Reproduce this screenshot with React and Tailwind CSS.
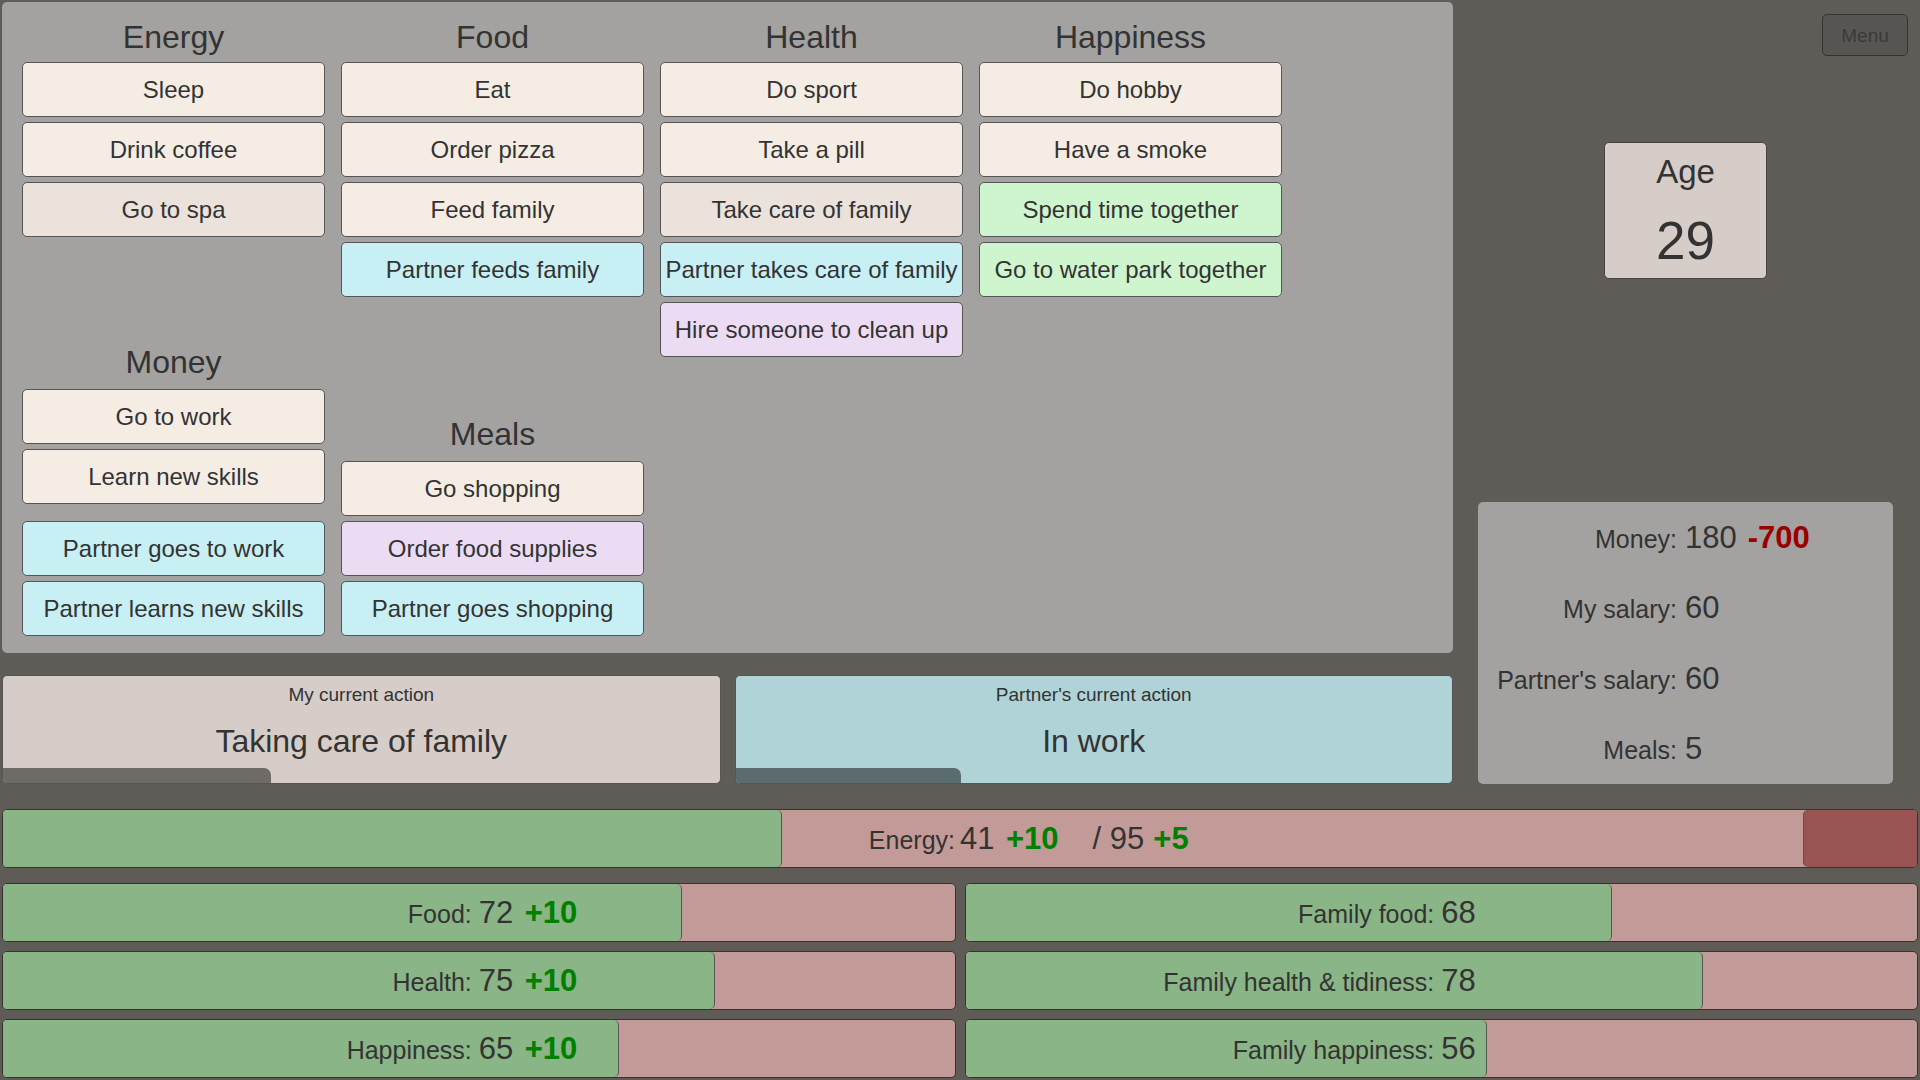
import React from 'react'

const font = "font-['Liberation_Sans',Arial,sans-serif]"

const tones = {
  base: 'bg-[#f5ede4]',
  busy: 'bg-[#ebe3db]',
  partner: 'bg-[#c8f0f4]',
  paid: 'bg-[#ebdcf3]',
  together: 'bg-[#cff5cf]',
}

const topGroups = [
  {
    title: 'Energy',
    actions: [['Sleep'], ['Drink coffee'], ['Go to spa', 'busy']],
    lower: {
      title: 'Money',
      actions: [['Go to work'], ['Learn new skills']],
      partner: [['Partner goes to work', 'partner'], ['Partner learns new skills', 'partner']],
    },
  },
  {
    title: 'Food',
    actions: [['Eat'], ['Order pizza'], ['Feed family'], ['Partner feeds family', 'partner']],
    lower: {
      title: 'Meals',
      actions: [['Go shopping'], ['Order food supplies', 'paid'], ['Partner goes shopping', 'partner']],
    },
  },
  {
    title: 'Health',
    actions: [
      ['Do sport'],
      ['Take a pill'],
      ['Take care of family', 'busy'],
      ['Partner takes care of family', 'partner'],
      ['Hire someone to clean up', 'paid'],
    ],
  },
  {
    title: 'Happiness',
    actions: [
      ['Do hobby'],
      ['Have a smoke'],
      ['Spend time together', 'together'],
      ['Go to water park together', 'together'],
    ],
  },
]

const myBars = [
  { label: 'Food', value: 72, delta: '+10', fill: 71.4 },
  { label: 'Health', value: 75, delta: '+10', fill: 74.8 },
  { label: 'Happiness', value: 65, delta: '+10', fill: 64.7 },
]

const familyBars = [
  { label: 'Family food', value: 68, fill: 67.9 },
  { label: 'Family health & tidiness', value: 78, fill: 77.5 },
  { label: 'Family happiness', value: 56, fill: 54.8 },
]

function ActionButton({ label, kind = 'base' }) {
  return (
    <button
      className={`h-[55px] w-full rounded-[5px] border border-[#555] text-[24px] leading-none text-[#333] ${tones[kind]}`}
    >
      {label}
    </button>
  )
}

function ButtonList({ items }) {
  return (
    <div className="flex flex-col gap-[5px]">
      {items.map(([label, kind]) => (
        <ActionButton key={label} label={label} kind={kind} />
      ))}
    </div>
  )
}

function Column({ group }) {
  return (
    <div className="flex w-[303px] flex-col">
      <div className="flex h-[60px] items-center justify-center pt-[10px] text-[32px] leading-none text-[#333]">
        {group.title}
      </div>
      <ButtonList items={group.actions} />
      {group.lower && (
        <div className="mt-auto flex flex-col">
          <div className="flex h-[54px] items-center justify-center text-[32px] leading-none text-[#333]">
            {group.lower.title}
          </div>
          <ButtonList items={group.lower.actions} />
          {group.lower.partner && (
            <div className="mt-[17px]">
              <ButtonList items={group.lower.partner} />
            </div>
          )}
        </div>
      )}
    </div>
  )
}

function CurrentAction({ title, text, progress, bg, barColor }) {
  return (
    <div className={`flex h-[109px] flex-1 flex-col overflow-hidden rounded-[5px] border border-[#555] ${bg}`}>
      <div className="pt-[9px] text-center text-[19px] leading-none text-[#333]">{title}</div>
      <div className="mt-[21px] text-center text-[32px] leading-none text-[#333]">{text}</div>
      <div className={`mt-auto h-[15px] rounded-tr-[7px] ${barColor}`} style={{ width: `${progress}px` }} />
    </div>
  )
}

function StatRow({ label, children }) {
  return (
    <div className="flex flex-1 items-center">
      <div className="flex items-baseline">
        <span className="w-[199px] text-right text-[25px] leading-none text-[#333]">{label}:</span>
        <span className="ml-[8px] flex items-baseline text-[31px] leading-none text-[#333]">{children}</span>
      </div>
    </div>
  )
}

function StatBar({ label, value, delta, fill }) {
  return (
    <div className="grid h-[59px] flex-1 overflow-hidden rounded-[5px] border border-[#333] bg-[#c29a98]">
      <div className="flex [grid-area:1/1]">
        <div className="h-full rounded-r-[5px] border-r border-[#555] bg-[#8ab586]" style={{ width: `${fill}%` }} />
      </div>
      <div className="flex items-center [grid-area:1/1]">
        <div className="flex w-full items-baseline leading-none text-[#333]">
          <span className="w-1/2 pr-[7px] text-right text-[25px]">{label}:</span>
          <span className="w-[46px] text-[31px]">{value}</span>
          {delta && <span className="text-[31px] font-bold text-[#008000]">{delta}</span>}
        </div>
      </div>
    </div>
  )
}

function EnergyBar() {
  return (
    <div className="grid h-[59px] overflow-hidden rounded-[5px] border border-[#333] bg-[#c29a98]">
      <div className="flex [grid-area:1/1]">
        <div className="h-full w-[40.7%] rounded-r-[5px] border-r border-[#555] bg-[#8ab586]" />
        <div className="flex-1" />
        <div className="h-full w-[5.95%] rounded-l-[5px] border-l border-[#555] bg-[#995352]" />
      </div>
      <div className="flex items-center [grid-area:1/1]">
        <div className="flex w-full items-baseline leading-none text-[#333]">
          <span className="w-1/2 pr-[5px] text-right text-[25px]">Energy:</span>
          <span className="w-[46px] text-[31px]">41</span>
          <span className="text-[31px] font-bold text-[#008000]">+10</span>
          <span className="ml-[34px] text-[31px]">/ 95</span>
          <span className="ml-[9px] text-[31px] font-bold text-[#008000]">+5</span>
        </div>
      </div>
    </div>
  )
}

export default function App() {
  return (
    <div className={`flex h-[1080px] w-[1920px] flex-col bg-[#5f5c57] p-[2px] ${font}`}>
      <div className="flex h-[782px]">
        <div className="flex w-[1451px] flex-col">
          <div className="flex h-[651px] gap-[16px] rounded-[5px] bg-[#a3a2a0] px-[20px] pb-[17px]">
            {topGroups.map((g) => (
              <Column key={g.title} group={g} />
            ))}
          </div>
          <div className="mt-auto flex gap-[14px]">
            <CurrentAction
              title="My current action"
              text="Taking care of family"
              progress={268}
              bg="bg-[#d6cdc8]"
              barColor="bg-[#6f6b66]"
            />
            <CurrentAction
              title="Partner's current action"
              text="In work"
              progress={225}
              bg="bg-[#afd3d6]"
              barColor="bg-[#5b6c6f]"
            />
          </div>
        </div>

        <div className="flex flex-1 flex-col">
          <div className="flex justify-end pr-[10px] pt-[12px]">
            <button className="h-[42px] w-[86px] rounded-[5px] border border-[#333] bg-[#585653] text-[19px] leading-none text-[#3a3a3a]">
              Menu
            </button>
          </div>
          <div className="mx-auto mt-[86px] flex h-[137px] w-[163px] flex-col items-center rounded-[5px] border border-[#444] bg-[#d6cdc8] pt-[12px] text-[#333]">
            <div className="text-[33px] leading-none">Age</div>
            <div className="mt-[26px] text-[53px] leading-none">29</div>
          </div>
          <div className="mx-[25px] mt-auto flex h-[282px] flex-col rounded-[5px] bg-[#a3a2a0]">
            <StatRow label="Money">
              180
              <span className="ml-[11px] font-bold text-[#9a0000]">-700</span>
            </StatRow>
            <StatRow label="My salary">60</StatRow>
            <StatRow label="Partner's salary">60</StatRow>
            <StatRow label="Meals">5</StatRow>
          </div>
        </div>
      </div>

      <div className="mt-[25px]">
        <EnergyBar />
      </div>

      <div className="mt-[15px] grid grid-cols-2 gap-x-[9px] gap-y-[9px]">
        {myBars.map((b, i) => (
          <React.Fragment key={b.label}>
            <StatBar {...b} />
            <StatBar {...familyBars[i]} />
          </React.Fragment>
        ))}
      </div>
    </div>
  )
}
